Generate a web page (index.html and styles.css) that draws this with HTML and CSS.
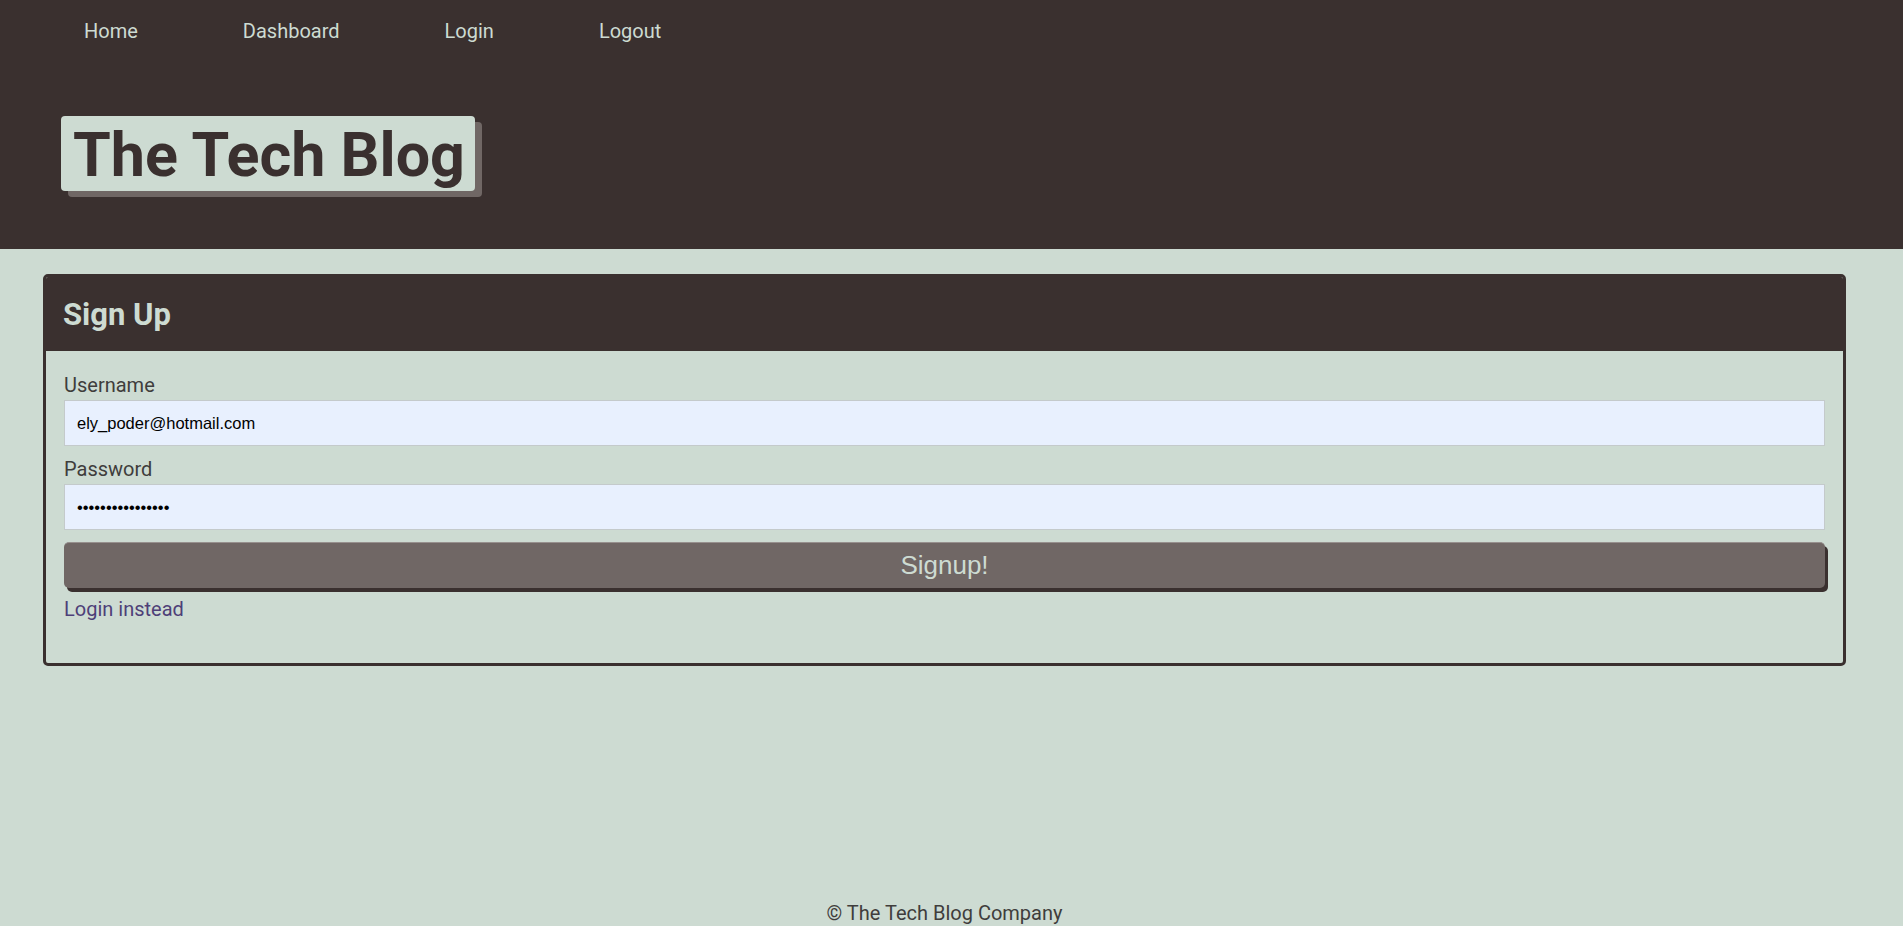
FILE: index.html
```html
<!DOCTYPE html>
<html lang="en">
<head>
<meta charset="utf-8">
<title>The Tech Blog</title>
<link rel="stylesheet" href="styles.css">
</head>
<body>
<header class="site-header">
  <nav class="nav">
    <a class="nav-link" href="#">Home</a>
    <a class="nav-link" href="#">Dashboard</a>
    <a class="nav-link" href="#">Login</a>
    <a class="nav-link" href="#">Logout</a>
  </nav>
  <div class="brand">
    <h1 class="brand-title">The Tech Blog</h1>
  </div>
</header>
<main class="main">
  <section class="card">
    <h2 class="card-header">Sign Up</h2>
    <form class="card-body">
      <label class="field-label" for="username">Username</label>
      <input class="field-input" id="username" type="text" value="ely_poder@hotmail.com">
      <label class="field-label" for="password">Password</label>
      <input class="field-input" id="password" type="password" value="abcdefghijklmnop">
      <button class="submit-btn" type="button">Signup!</button>
      <a class="alt-link" href="#">Login instead</a>
    </form>
  </section>
</main>
<footer class="footer">© The Tech Blog Company</footer>
</body>
</html>
```
FILE: styles.css
```css
* { box-sizing: border-box; }

html, body {
  margin: 0;
  padding: 0;
}

body {
  min-height: 100vh;
  display: flex;
  flex-direction: column;
  background: #cddbd2;
  color: #3f3d3c;
  font-family: Roboto, "Noto Sans", sans-serif;
}

/* ---------- header ---------- */
.site-header {
  background: #3a302f;
  height: 249px;
  padding: 20px 0 0 0;
}

.nav {
  display: flex;
  gap: 105px;
  padding-left: 84px;
  height: 23px;
}

.nav-link {
  color: #cddbd2;
  text-decoration: none;
  font-size: 20px;
  line-height: 23px;
}

.brand {
  padding-left: 61px;
  margin-top: 73px;
}

.brand-title {
  display: inline-block;
  margin: 0;
  padding: 3px 10px 0 12px;
  height: 75px;
  line-height: 72px;
  font-size: 61px;
  font-weight: 700;
  color: #3a302f;
  background: #cddbd2;
  border-radius: 4px;
  box-shadow: 7px 6px 0 #706765;
}

/* ---------- main ---------- */
.main {
  flex: 1;
  padding-top: 25px;
}

.card {
  margin-left: 43px;
  width: 1803px;
  border: 3px solid #3a302f;
  border-radius: 5px;
  overflow: hidden;
}

.card-header {
  margin: 0;
  background: #3a302f;
  color: #cddbd2;
  font-size: 31px;
  font-weight: 700;
  line-height: 36px;
  padding: 20px 17px 18px 17px;
}

.card-body {
  display: flex;
  flex-direction: column;
  padding: 23px 18px 42px 18px;
}

.field-label {
  font-size: 20px;
  line-height: 23px;
  margin-bottom: 3px;
  color: #3f3d3c;
}

.field-input {
  height: 46px;
  border: 1px solid #c4cacb;
  background: #e8f0fe;
  padding: 0 12px;
  font-family: "Liberation Sans", Arial, sans-serif;
  font-size: 16.5px;
  color: #000;
  outline: none;
  margin-bottom: 12px;
}

.submit-btn {
  height: 46px;
  border: none;
  border-top: 1px solid #97908e;
  border-radius: 5px;
  background: #706765;
  color: #cddbd2;
  font-family: "Liberation Sans", Arial, sans-serif;
  font-size: 26px;
  box-shadow: 3px 4px 0 #3a302f;
  cursor: pointer;
  margin-bottom: 10px;
  margin-top: 0;
}

.alt-link {
  align-self: flex-start;
  font-size: 20px;
  line-height: 23px;
  color: #4e3f78;
  text-decoration: none;
}

/* ---------- footer ---------- */
.footer {
  margin-left: 43px;
  width: 1803px;
  text-align: center;
  font-size: 20px;
  line-height: 22px;
  padding-bottom: 2px;
  color: #3f3d3c;
}
```
